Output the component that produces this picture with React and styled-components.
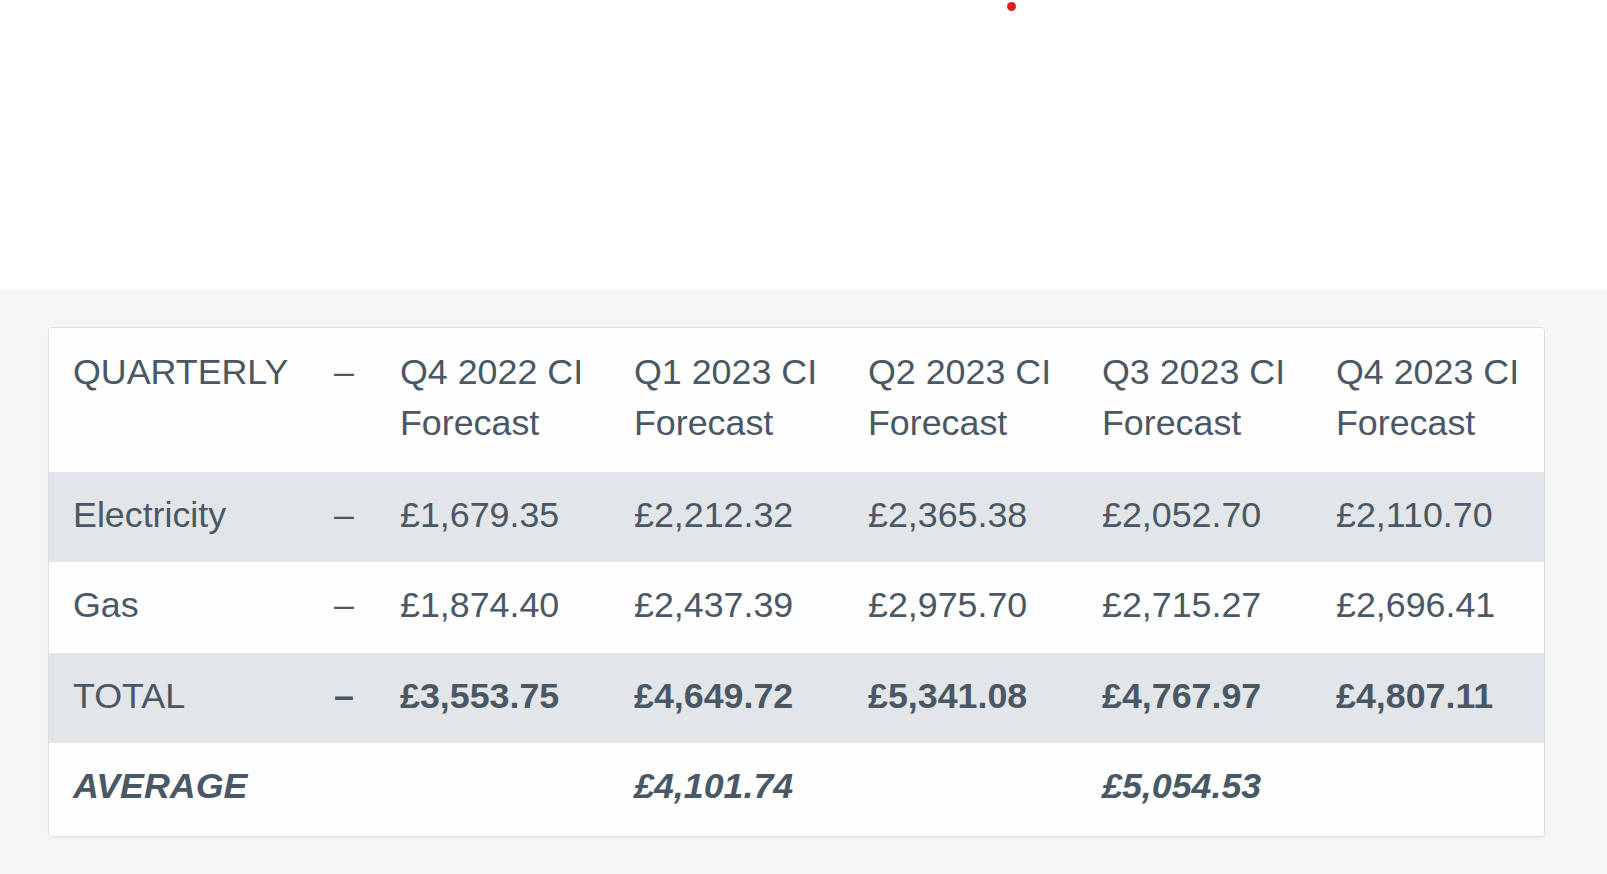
import React from 'react';
import styled, { createGlobalStyle } from 'styled-components';

const GlobalStyle = createGlobalStyle`
  html, body {
    margin: 0;
    padding: 0;
    background: #f4f5f5;
  }
  body {
    font-family: "Liberation Sans", Arial, sans-serif;
  }
`;

const TopBand = styled.div`
  height: 289px;
  background: #fff;
  display: flex;
  align-items: flex-start;
`;

const RedDot = styled.span`
  width: 9px;
  height: 9px;
  border-radius: 50%;
  background: #e41e26;
  margin: 2px 0 0 1007px;
`;

const Section = styled.section`
  background: #f4f5f5;
  padding: 38px 62px 40px 48px;
`;

const Card = styled.div`
  background: #fff;
  border: 1px solid #dde0e3;
  border-radius: 4px;
  box-shadow: 0 1px 2px rgba(0, 0, 0, 0.04);
  overflow: hidden;
`;

const Table = styled.table`
  width: 100%;
  border-collapse: collapse;
  table-layout: fixed;
  color: #4a5765;
  font-size: 35.8px;
  line-height: 50.5px;
`;

const Row = styled.tr`
  background: ${(p) => (p.$striped ? '#e3e6e9' : '#fefefe')};
`;

const Cell = styled.td`
  padding: ${(p) => (p.$head ? '19px 24px 23.5px' : '18px 24px 22px')};
  padding-bottom: ${(p) => (p.$last ? '24px' : undefined)};
  text-align: left;
  vertical-align: top;
  font-weight: ${(p) => (p.$bold ? 700 : 400)};
  font-style: ${(p) => (p.$italic ? 'italic' : 'normal')};
`;

const quarters = ['Q4 2022', 'Q1 2023', 'Q2 2023', 'Q3 2023', 'Q4 2023'];

const rows = [
  { label: 'Electricity', values: ['£1,679.35', '£2,212.32', '£2,365.38', '£2,052.70', '£2,110.70'], striped: true },
  { label: 'Gas', values: ['£1,874.40', '£2,437.39', '£2,975.70', '£2,715.27', '£2,696.41'] },
  { label: 'TOTAL', values: ['£3,553.75', '£4,649.72', '£5,341.08', '£4,767.97', '£4,807.11'], striped: true, bold: true },
];

const averages = ['', '£4,101.74', '', '£5,054.53', ''];

const App = () => (
  <>
    <GlobalStyle />
    <TopBand>
      <RedDot />
    </TopBand>
    <Section>
      <Card>
        <Table>
          <colgroup>
            <col style={{ width: 261 }} />
            <col style={{ width: 66 }} />
            {quarters.map((q) => (
              <col key={q} style={{ width: 234 }} />
            ))}
          </colgroup>
          <thead>
            <Row>
              <Cell as="th" $head>QUARTERLY</Cell>
              <Cell as="th" $head>–</Cell>
              {quarters.map((q) => (
                <Cell as="th" $head key={q}>{q} CI Forecast</Cell>
              ))}
            </Row>
          </thead>
          <tbody>
            {rows.map((r) => (
              <Row key={r.label} $striped={r.striped}>
                <Cell>{r.label}</Cell>
                <Cell $bold={r.bold}>–</Cell>
                {r.values.map((v) => (
                  <Cell key={v} $bold={r.bold}>{v}</Cell>
                ))}
              </Row>
            ))}
            <Row>
              <Cell $bold $italic $last>AVERAGE</Cell>
              <Cell $last />
              {averages.map((v, i) => (
                <Cell key={i} $bold $italic $last>{v}</Cell>
              ))}
            </Row>
          </tbody>
        </Table>
      </Card>
    </Section>
  </>
);

export default App;
